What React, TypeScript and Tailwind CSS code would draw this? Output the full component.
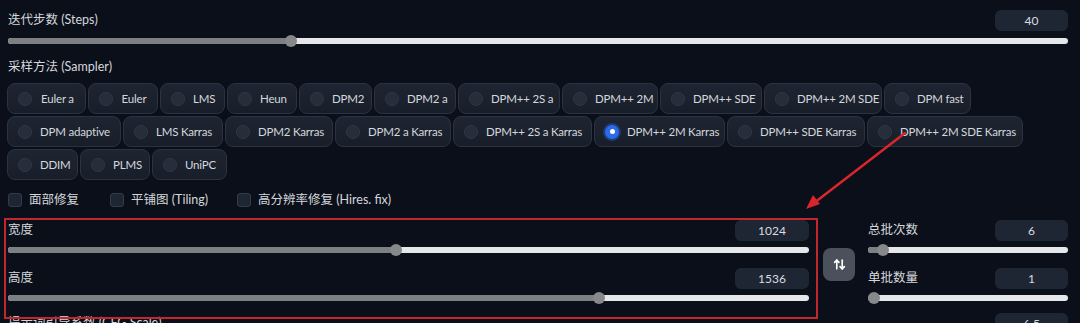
import React from 'react';
import { ArrowUpDown } from 'lucide-react';

const FONT = "font-['Lato','Noto_Sans_CJK_SC',sans-serif]";

const SAMPLER_ROWS: { label: string; w: string }[][] = [
  [
    { label: 'Euler a', w: 'w-[79px]' },
    { label: 'Euler', w: 'w-[70px]' },
    { label: 'LMS', w: 'w-[65px]' },
    { label: 'Heun', w: 'w-[70px]' },
    { label: 'DPM2', w: 'w-[73px]' },
    { label: 'DPM2 a', w: 'w-[82px]' },
    { label: 'DPM++ 2S a', w: 'w-[102px]' },
    { label: 'DPM++ 2M', w: 'w-[96px]' },
    { label: 'DPM++ SDE', w: 'w-[102px]' },
    { label: 'DPM++ 2M SDE', w: 'w-[118px]' },
    { label: 'DPM fast', w: 'w-[87px]' },
  ],
  [
    { label: 'DPM adaptive', w: 'w-[114px]' },
    { label: 'LMS Karras', w: 'w-[100px]' },
    { label: 'DPM2 Karras', w: 'w-[108px]' },
    { label: 'DPM2 a Karras', w: 'w-[116px]' },
    { label: 'DPM++ 2S a Karras', w: 'w-[139px]' },
    { label: 'DPM++ 2M Karras', w: 'w-[131px]' },
    { label: 'DPM++ SDE Karras', w: 'w-[138px]' },
    { label: 'DPM++ 2M SDE Karras', w: 'w-[156px]' },
  ],
  [
    { label: 'DDIM', w: 'w-[71px]' },
    { label: 'PLMS', w: 'w-[70px]' },
    { label: 'UniPC', w: 'w-[75px]' },
  ],
];

const SELECTED = 'DPM++ 2M Karras';

// range-style slider: pct is 0..1 of the track
const Slider = ({ pct }: { pct: number }) => (
  <div className="relative h-[12px] w-full">
    <div className="absolute left-0 right-0 top-[3px] h-[6px] rounded-full bg-[#e6e7ea]" />
    <div
      className="absolute left-0 top-[3px] h-[6px] rounded-full bg-[#7d7f82]"
      style={{ width: `calc(6px + ${pct} * (100% - 12px))` }}
    />
    <div
      className="absolute top-0 h-[12px] w-[12px] rounded-full bg-[#86888b]"
      style={{ left: `calc(${pct} * (100% - 12px))` }}
    />
  </div>
);

const NumBox = ({ value, w = 'w-[73px]' }: { value: string; w?: string }) => (
  <div className={`${w} h-[21px] rounded-md bg-[#1f2633] flex items-center justify-center text-[12px] text-[#d8dbe0]`}>
    {value}
  </div>
);

const LabelRow = ({ label, value, boxW }: { label: string; value: string; boxW?: string }) => (
  <div className="flex h-[21px] items-center justify-between">
    <span className="text-[12.5px] text-[#d4d7dc]">{label}</span>
    <NumBox value={value} w={boxW} />
  </div>
);

const SliderField = ({ label, value, pct, boxW }: { label: string; value: string; pct: number; boxW?: string }) => (
  <div className="flex flex-col">
    <LabelRow label={label} value={value} boxW={boxW} />
    <div className="mt-[3px]">
      <Slider pct={pct} />
    </div>
  </div>
);

const Radio = ({ label, w }: { label: string; w: string }) => {
  const on = label === SELECTED;
  return (
    <div
      className={`${w} h-[31px] flex items-center pl-[10px] pr-[10px] rounded-lg border border-[#2b3341] bg-gradient-to-b from-[#1e2532] to-[#181e29]`}
    >
      {on ? (
        <span className="h-[14px] w-[14px] shrink-0 rounded-full bg-[#2f6ae6] ring-2 ring-[#1d3a7a] flex items-center justify-center">
          <span className="h-[5px] w-[5px] rounded-full bg-white" />
        </span>
      ) : (
        <span className="h-[14px] w-[14px] shrink-0 rounded-full bg-[#262e3b] border border-[#2f3846]" />
      )}
      <span className="flex-1 pl-[8px] text-center whitespace-nowrap text-[11.5px] tracking-[-0.2px] text-[#d4d7dc]">
        {label}
      </span>
    </div>
  );
};

const Check = ({ label, className = '' }: { label: string; className?: string }) => (
  <div className={`flex items-center ${className}`}>
    <span className="h-[14px] w-[14px] rounded-[3px] border border-[#333b49] bg-[#1f2633]" />
    <span className="ml-[7px] text-[12.5px] text-[#d4d7dc]">{label}</span>
  </div>
);

export default function App() {
  return (
    <div className={`${FONT} relative h-[323px] w-[1080px] overflow-hidden bg-[#0b0f19] pl-[8px] pr-[12px] pt-[10px]`}>
      {/* Steps */}
      <LabelRow label="迭代步数 (Steps)" value="40" />
      <div className="mt-[4px]">
        <Slider pct={0.264} />
      </div>

      {/* Sampler */}
      <div className="mt-[12px] h-[16px] flex items-center text-[12.5px] text-[#d4d7dc]">采样方法 (Sampler)</div>
      <div className="mt-[8px] -ml-[1px] flex flex-col gap-[2px]">
        {SAMPLER_ROWS.map((row, i) => (
          <div key={i} className="flex gap-[2px]">
            {row.map((s) => (
              <Radio key={s.label} label={s.label} w={s.w} />
            ))}
          </div>
        ))}
      </div>

      {/* Checkboxes */}
      <div className="mt-[12px] h-[16px] flex items-center">
        <Check label="面部修复" className="w-[102px]" />
        <Check label="平铺图 (Tiling)" className="w-[127px]" />
        <Check label="高分辨率修复 (Hires. fix)" />
      </div>

      {/* Size & batch */}
      <div className="mt-[12px] flex items-start">
        <div className="relative w-[801px]">
          <div className="flex flex-col gap-[12px]">
            <SliderField label="宽度" value="1024" pct={0.484} boxW="w-[74px]" />
            <SliderField label="高度" value="1536" pct={0.742} boxW="w-[74px]" />
          </div>
          {/* annotation box */}
          <div className="pointer-events-none absolute -left-[4px] -top-[2px] -right-[9px] -bottom-[15px] border-2 border-[#c1272d]" />
        </div>
        <div className="ml-[14px] mt-[28px] h-[33px] w-[32px] rounded-lg bg-[#4a515d] flex items-center justify-center text-white">
          <ArrowUpDown size={13} strokeWidth={3} />
        </div>
        <div className="ml-[13px] w-[200px] flex flex-col gap-[12px]">
          <SliderField label="总批次数" value="6" pct={0.0505} />
          <SliderField label="单批数量" value="1" pct={0} />
        </div>
      </div>

      {/* CFG (cut off) */}
      <div className="mt-[9px]">
        <LabelRow label="提示词引导系数 (CFG Scale)" value="6.5" />
      </div>

      {/* annotation arrow */}
      <svg className="pointer-events-none absolute left-0 top-0" width="1080" height="323">
        <line x1="905" y1="133" x2="814" y2="203" stroke="#d9262c" strokeWidth="2.5" strokeLinecap="round" />
        <polygon points="806,209 813,195 820,204" fill="#d9262c" />
      </svg>
    </div>
  );
}
